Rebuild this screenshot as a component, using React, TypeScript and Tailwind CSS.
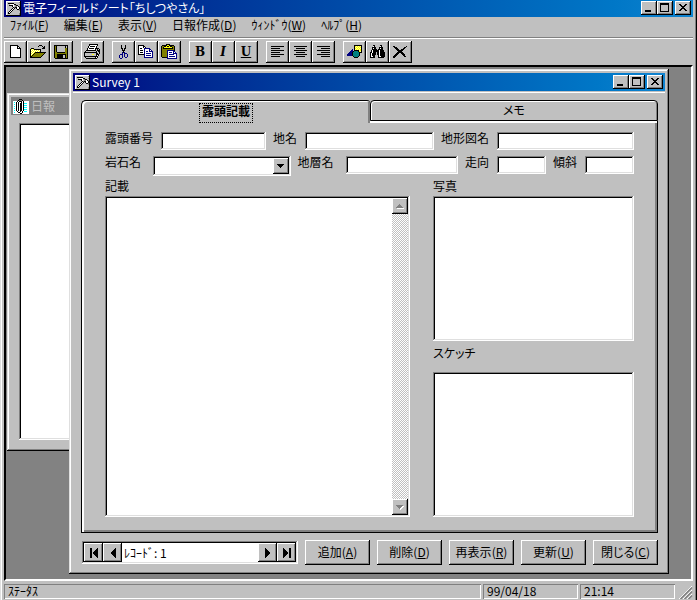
import { useState } from "react";
import type { ReactNode } from "react";
import clsx from "clsx";

const RAISED = "bg-[#c0c0c0] shadow-[inset_-1px_-1px_#000,inset_1px_1px_#fff,inset_-2px_-2px_#808080]";
const SUNKEN = "bg-white shadow-[inset_-1px_-1px_#fff,inset_1px_1px_#808080,inset_-2px_-2px_#dfdfdf,inset_2px_2px_#000]";
const WINDOW = "bg-[#c0c0c0] shadow-[inset_-1px_-1px_#000,inset_1px_1px_#dfdfdf,inset_-2px_-2px_#808080,inset_2px_2px_#fff]";

const PALETTE: Record<string, string> = {
    k: "#000000",
    w: "#ffffff",
    g: "#808080",
    s: "#c0c0c0",
    y: "#808000",
    Y: "#ffff00",
    L: "#ffff99",
    b: "#000080",
    t: "#008080",
    c: "#00ffff",
};

// 16 colour bitmap icons, one character per pixel
const ICONS = {
    hammer: [
        "wwwwwwwwwwwwwwk",
        "wssssssssssssgk",
        "wskkkkkkssssssk",
        "wssswwwwkksssgk",
        "wsskkkkwsgkkssk",
        "wssssskwsggwkgk",
        "wsssssskgkkwwkk",
        "wssssskwkskwwkk",
        "wsssskwkssskkgk",
        "wssskwkssssssgk",
        "wsskwkssssssssk",
        "wskwksssssssssk",
        "wskksssssssssgk",
        "wssssssssssssgk",
        "kkkkkkkkkkkkkkk",
    ],
    clip: [
        "......kkk.......",
        ".....k...k......",
        "wwwwkwkkkwkwwwww",
        "wcwkwkwwkwkwwwww",
        "wwwkwkwkkwkcccww",
        "wcwkwkwkkwkwwwww",
        "wwwkwkwkkwkcccww",
        "wcwkwkwkkwkwwwww",
        "wwwkwkwkkwkcccww",
        "wcwkwkwkkwkwwwww",
        "wwwkwkwkkwkcccww",
        "wcwkwkwkkwkwwwww",
        "wwwwkwwkwkwcccww",
        "wcwwwkkwwkwwwwww",
        "wwwwwwwkkwwwwwww",
    ],
    file: [
        "kkkkkkkk...",
        "kwwwwwwkk..",
        "kwwwwwwkwk.",
        "kwwwwwwkkkk",
        "kwwwwwwwwwk",
        "kwwwwwwwwwk",
        "kwwwwwwwwwk",
        "kwwwwwwwwwk",
        "kwwwwwwwwwk",
        "kwwwwwwwwwk",
        "kwwwwwwwwwk",
        "kwwwwwwwwwk",
        "kkkkkkkkkkk",
    ],
    open: [
        ".........kkk....",
        "........k...k.k.",
        ".............kk.",
        ".kkk........kkk.",
        "kYwYkkkkkkk.....",
        "kwYwYwYwYwk.....",
        "kYwYwYwYwYk.....",
        "kwYwYkkkkkkkkkkk",
        "kYwYkyyyyyyyyyk.",
        "kwYkyyyyyyyyyk..",
        "kYkyyyyyyyyyk...",
        "kkyyyyyyyyyk....",
        "kkkkkkkkkkk.....",
    ],
    save: [
        "kkkkkkkkkkkkkk",
        "kykssssssssksk",
        "kykssssssssksk",
        "kykssssssssyyk",
        "kykssssssssyyk",
        "kykssssssssyyk",
        "kykssssssssyyk",
        "kyykkkkkkkkyyk",
        "kyyyyyyyyyyyyk",
        "kyykkkkkkkkkyk",
        "kyykkkkkksskyk",
        "kyykkkkkksskyk",
        "kyykkkkkksskyk",
        ".kkkkkkkkkkkkk",
    ],
    print: [
        ".....kkkkkkkkk..",
        ".....kwwwwwwwk..",
        "....kwkkkkkwk...",
        "....kwwwwwwwk...",
        "...kwkkkkkwkkkk.",
        "...kwwwwwwwk.k.k",
        "..kkkkkkkkkk.kkk",
        ".k..........k.kk",
        "kkkkkkkkkkkkk.sk",
        "kssssssssssskksk",
        "ksssssssYYsskkk.",
        "kssssssssssskwk.",
        "kkkkkkkkkkkkkk..",
        ".kssssssssskwk..",
        "..kkkkkkkkkkk...",
    ],
    cut: [
        "..k...k..",
        "..k...k..",
        "..k...k..",
        "..kk.kk..",
        "...k.k...",
        "...kkk...",
        "....k....",
        "...bkb...",
        "...b.bbb.",
        ".bbb.b..b",
        "b..b.b..b",
        "b..b.b..b",
        "b..b..bb.",
        ".bb......",
    ],
    copy: [
        "kkkkkk..........",
        "kwwwwkk.........",
        "kwwwwkwk........",
        "kwkkwwbbbbbb....",
        "kwwwwwbwwwwbb...",
        "kwkkkwbwwwwbwb..",
        "kwwwwwbwbbwbbbb.",
        "kwkkkwbwwwwwwwb.",
        "kwwwwwbwbbbbbwb.",
        "kkkkkkbwwwwwwwb.",
        "......bwbbbbbwb.",
        "......bwwwwwwwb.",
        "......bbbbbbbbb.",
    ],
    paste: [
        ".....kkkk.......",
        ".kkkkkYYkkkkk...",
        "kyykkYkkYkkyyk..",
        "kykYYYYYYYYkyk..",
        "kykkkkkkkkkkyk..",
        "kyyyyyyyyyyyyk..",
        "kyyyyybbbbbbbk..",
        "kyyyyybwwwwwbb..",
        "kyyyyybwbbbwbwb.",
        "kyyyyybwwwwwbbbb",
        "kyyyyybwbbbbbwwb",
        "kyyyyybwwwwwwwwb",
        "kyyyyybwbbbbbbwb",
        ".kkkkkbwwwwwwwwb",
        "......bbbbbbbbbb",
    ],
    shapes: [
        ".......kkkkkkkk",
        ".......kYLYLYLk",
        ".......kLYLYLYk",
        ".......kYLYLYLk",
        ".....b.kLYLYLYk",
        "....bb.kkkkkLYk",
        "...bbbkttttkYLk",
        "..bbbkttttttkkk",
        ".bbbbkttttttk..",
        "bbbbbkttttttk..",
        "bbbbbkttttttk..",
        "......kttttk...",
        ".......kkkk....",
    ],
    find: [
        "...kk.....kk...",
        "...wk.....wk...",
        "..kkkk...kkkk..",
        "..kwkk...kwkk..",
        "..kkkkk.kkkkk..",
        ".kwkkkkkkwkkkk.",
        ".kwkkkkkkwkkkk.",
        "kkwkkkskkwkkkkk",
        "kwkkkkskkwkkkkk",
        "kwkkkk.kkwkkkkk",
        "kwkkk...kwkkkkk",
        "kwwkk...kwwkkkk",
        "kkkkk...kkkkkk.",
    ],
    remove: [
        "kk...........k",
        ".kkk.......kk.",
        "..kkk.....kk..",
        "...kkk..kkk...",
        "....kkkkkk....",
        ".....kkkk.....",
        "....kkkkkk....",
        "...kkk..kkk...",
        "..kkk....kkk..",
        ".kkk......kk..",
        "kkk........kk.",
        "kk............",
    ],
    left: ["kkkkkkkkkkkkk", "", "kkkkkkkkk", "", "kkkkkkkkkkkkk", "", "kkkkkkkkk", "", "kkkkkkkkkkkkk", "", "kkkkkkkkk"],
    center: ["kkkkkkkkkkkkk", "", "..kkkkkkkkk", "", "kkkkkkkkkkkkk", "", "..kkkkkkkkk", "", "kkkkkkkkkkkkk", "", "..kkkkkkkkk"],
    right: ["kkkkkkkkkkkkk", "", "....kkkkkkkkk", "", "kkkkkkkkkkkkk", "", "....kkkkkkkkk", "", "kkkkkkkkkkkkk", "", "....kkkkkkkkk"],
    minimize: ["........", "........", "........", "........", "........", "........", "kkkkkk..", "kkkkkk.."],
    maximize: ["kkkkkkkkk", "kkkkkkkkk", "k.......k", "k.......k", "k.......k", "k.......k", "k.......k", "k.......k", "kkkkkkkkk"],
    close: ["kk....kk", ".kk..kk.", "..kkkk..", "...kk...", "..kkkk..", ".kk..kk.", "kk....kk"],
    down: ["kkkkkkk", ".kkkkk.", "..kkk..", "...k..."],
    scrollUp: ["...g....", "..ggg...", ".ggggg..", "ggggggg.", ".wwwwwww"],
    scrollDown: ["ggggggg.", ".gggggww", "..gggww.", "...gww..", "....w..."],
    first: ["kk.....k", "kk....kk", "kk...kkk", "kk..kkkk", "kk.kkkkk", "kk.kkkkk", "kk..kkkk", "kk...kkk", "kk....kk", "kk.....k"],
    prev: [".....k", "....kk", "...kkk", "..kkkk", ".kkkkk", ".kkkkk", "..kkkk", "...kkk", "....kk", ".....k"],
    next: ["k.....", "kk....", "kkk...", "kkkk..", "kkkkk.", "kkkkk.", "kkkk..", "kkk...", "kk....", "k....."],
    last: ["k.....kk", "kk....kk", "kkk...kk", "kkkk..kk", "kkkkk.kk", "kkkkk.kk", "kkkk..kk", "kkk...kk", "kk....kk", "k.....kk"],
};

type IconName = keyof typeof ICONS;

function Icon({ name }: { name: IconName }) {
    const rows = ICONS[name];
    const width = Math.max(...rows.map((row) => row.length));
    return (
        <svg width={width} height={rows.length} shapeRendering="crispEdges" aria-hidden="true" className="shrink-0">
            {rows.map((row, y) =>
                row.split("").map((c, x) =>
                    PALETTE[c] ? <rect key={`${x}-${y}`} x={x} y={y} width="1" height="1" fill={PALETTE[c]} /> : null
                )
            )}
        </svg>
    );
}

function WindowButtons() {
    const button = clsx(RAISED, "flex h-3.5 w-4 items-center justify-center pr-px pb-px");
    return (
        <div className="flex">
            <button className={button} aria-label="最小化"><Icon name="minimize" /></button>
            <button className={button} aria-label="最大化"><Icon name="maximize" /></button>
            <button className={clsx(button, "ml-0.5")} aria-label="閉じる"><Icon name="close" /></button>
        </div>
    );
}

function Key({ children }: { children: string }) {
    return <>(<span className="underline underline-offset-1">{children}</span>)</>;
}

const MENUS = [
    ["ﾌｧｲﾙ", "F"],
    ["編集", "E"],
    ["表示", "V"],
    ["日報作成", "D"],
    ["ｳｨﾝﾄﾞｳ", "W"],
    ["ﾍﾙﾌﾟ", "H"],
];

const TOOLS: { label: string; icon?: IconName; text?: ReactNode }[][] = [
    [
        { label: "新規作成", icon: "file" },
        { label: "開く", icon: "open" },
        { label: "保存", icon: "save" },
    ],
    [{ label: "印刷", icon: "print" }],
    [
        { label: "切り取り", icon: "cut" },
        { label: "コピー", icon: "copy" },
        { label: "貼り付け", icon: "paste" },
    ],
    [
        { label: "太字", text: "B" },
        { label: "斜体", text: <i>I</i> },
        { label: "下線", text: <u>U</u> },
    ],
    [
        { label: "左揃え", icon: "left" },
        { label: "中央揃え", icon: "center" },
        { label: "右揃え", icon: "right" },
    ],
    [
        { label: "図形", icon: "shapes" },
        { label: "検索", icon: "find" },
        { label: "削除", icon: "remove" },
    ],
];

function Toolbar() {
    return (
        <div role="toolbar" className="flex gap-2 py-0.5">
            {TOOLS.map((group, i) => (
                <div key={i} className="flex">
                    {group.map((tool) => (
                        <button
                            key={tool.label}
                            aria-label={tool.label}
                            className={clsx(RAISED, "flex h-[22px] w-[23px] items-center justify-center pr-px pb-px font-['DejaVu_Serif',serif] text-[12px] leading-4 font-bold")}
                        >
                            {tool.icon ? <Icon name={tool.icon} /> : tool.text}
                        </button>
                    ))}
                </div>
            ))}
        </div>
    );
}

function Field({ id, label, labelWidth, width }: { id: string; label: string; labelWidth: string; width: string }) {
    return (
        <div className={clsx("flex min-w-0 items-start", width)}>
            <label htmlFor={id} className={clsx("shrink-0 leading-3 whitespace-nowrap", labelWidth)}>{label}</label>
            <input id={id} type="text" className={clsx(SUNKEN, "h-[18px] w-0 min-w-0 grow px-1 outline-none")} />
        </div>
    );
}

function RecordForm() {
    return (
        <div className="flex min-h-0 grow flex-col border-x border-b border-black pt-[9px] pr-[23px] pb-[15px] pl-[23px] shadow-[inset_2px_0_#fff,inset_-2px_-2px_#808080]">
            <div className="flex gap-[7px]">
                <Field id="no" label="露頭番号" labelWidth="w-14" width="w-[161px] grow" />
                <Field id="place" label="地名" labelWidth="w-8" width="w-[161px] grow" />
                <Field id="map" label="地形図名" labelWidth="w-14" width="w-[193px] grow" />
            </div>
            <div className="mt-1.5 flex gap-[7px]">
                <div className="flex w-[185px] min-w-0 grow items-start">
                    <label htmlFor="rock" className="w-12 shrink-0 leading-3">岩石名</label>
                    <div className="relative w-0 grow">
                        <select id="rock" className={clsx(SUNKEN, "block h-5 w-full appearance-none px-1 outline-none")}>
                            <option></option>
                        </select>
                        <span className={clsx(RAISED, "pointer-events-none absolute inset-y-0.5 right-0.5 flex w-4 items-center justify-center")}>
                            <Icon name="down" />
                        </span>
                    </div>
                </div>
                <Field id="stratum" label="地層名" labelWidth="w-12" width="w-[160px] grow" />
                <Field id="strike" label="走向" labelWidth="w-8" width="w-[81px]" />
                <Field id="dip" label="傾斜" labelWidth="w-8" width="w-[81px]" />
            </div>
            <div className="flex min-h-0 grow gap-[23px]">
                <div className="flex w-[305px] grow flex-col">
                    <label htmlFor="note" className="h-5 leading-5">記載</label>
                    <div className={clsx(SUNKEN, "flex min-h-0 grow p-0.5")}>
                        <textarea id="note" className="min-w-0 grow resize-none bg-transparent p-1 outline-none" />
                        <div className="flex w-4 flex-col justify-between bg-[repeating-conic-gradient(#c0c0c0_0_25%,#fff_0_50%)] bg-[length:2px_2px]">
                            <button aria-label="上へ" className={clsx(RAISED, "flex h-4 items-center justify-center")}><Icon name="scrollUp" /></button>
                            <button aria-label="下へ" className={clsx(RAISED, "flex h-4 items-center justify-center")}><Icon name="scrollDown" /></button>
                        </div>
                    </div>
                </div>
                <div className="flex w-[201px] grow flex-col">
                    <h3 className="h-5 leading-5">写真</h3>
                    <div className={clsx(SUNKEN, "grow")} />
                    <h3 className="h-[31px] leading-6">スケッチ</h3>
                    <div className={clsx(SUNKEN, "grow")} />
                </div>
            </div>
        </div>
    );
}

const ACTIONS = [
    ["追加", "A"],
    ["削除", "D"],
    ["再表示", "R"],
    ["更新", "U"],
    ["閉じる", "C"],
];

function RecordNav() {
    const button = clsx(RAISED, "flex w-[19px] items-center justify-center");
    return (
        <div className={clsx(SUNKEN, "ml-px flex h-[23px] grow p-0.5")}>
            <button className={button} aria-label="先頭"><Icon name="first" /></button>
            <button className={button} aria-label="前へ"><Icon name="prev" /></button>
            <span className="grow pl-0.5 leading-[19px]">ﾚｺｰﾄﾞ: 1</span>
            <button className={button} aria-label="次へ"><Icon name="next" /></button>
            <button className={button} aria-label="最後"><Icon name="last" /></button>
        </div>
    );
}

function SurveyWindow() {
    const [tab, setTab] = useState(0);
    return (
        <section className={clsx(WINDOW, "absolute top-0.5 right-[22px] bottom-[5px] left-[63px] flex flex-col p-1")}>
            <div className="flex h-[18px] shrink-0 items-center bg-linear-to-r from-[#000080] to-[#1084d0] px-0.5 text-white">
                <Icon name="hammer" />
                <h2 className="grow pl-0.5">Survey 1</h2>
                <WindowButtons />
            </div>
            <div className="mt-px h-px shrink-0 bg-white" />
            <div className="flex min-h-0 grow flex-col pt-[7px] pr-[7px] pb-[5px] pl-2">
                <div role="tablist" className="flex h-[23px] shrink-0">
                    <button
                        role="tab"
                        aria-selected={tab === 0}
                        onClick={() => setTab(0)}
                        className="flex flex-1 justify-center rounded-tl-[5px] rounded-tr-[3px] border-t border-l border-black pt-0.5 font-bold shadow-[inset_2px_1px_#fff,inset_-2px_0_#808080]"
                    >
                        <span className="border border-dotted border-black px-0.5">露頭記載</span>
                    </button>
                    <div className="flex flex-1 flex-col">
                        <button
                            role="tab"
                            aria-selected={tab === 1}
                            onClick={() => setTab(1)}
                            className="h-[21px] rounded-t-[4px] border border-black pb-0.5 shadow-[inset_1px_1px_#fff,inset_-1px_0_#808080]"
                        >
                            メモ
                        </button>
                        <div className="h-0.5 border-r border-black bg-white" />
                    </div>
                </div>
                <RecordForm />
                <div className="mt-[7px] flex shrink-0 items-center gap-[7px]">
                    <RecordNav />
                    {ACTIONS.map(([label, key]) => (
                        <button key={key} className={clsx(RAISED, "h-[25px] w-[65px] shrink-0 pb-0.5 whitespace-nowrap")}>
                            {label}<Key>{key}</Key>
                        </button>
                    ))}
                </div>
            </div>
        </section>
    );
}

function DailyWindow() {
    return (
        <section className={clsx(WINDOW, "absolute top-[26px] bottom-[128px] left-px flex w-[400px] flex-col p-1")}>
            <div className="flex h-[18px] shrink-0 items-center bg-linear-to-r from-[#808080] to-[#b5b5b5] px-0.5 text-[#c0c0c0]">
                <Icon name="clip" />
                <h2 className="pl-0.5">日報</h2>
            </div>
            <div className="flex grow p-2 pb-[7px]">
                <div className={clsx(SUNKEN, "grow")} />
            </div>
        </section>
    );
}

function StatusBar() {
    const panel = "h-[15px] pl-1 shadow-[inset_1px_1px_#808080,inset_-1px_-1px_#fff]";
    return (
        <footer className="flex h-[19px] shrink-0 gap-0.5 pt-[3px] leading-[14px]">
            <div className={clsx(panel, "grow")}>ｽﾃｰﾀｽ</div>
            <div className={clsx(panel, "w-[95px]")}>99/04/18</div>
            <div className={clsx(panel, "w-[95px]")}>21:14</div>
            <svg width="16" height="14" viewBox="0 0 14 14" className="mt-px" aria-hidden="true">
                <path d="M1 14 14 1M5 14l9-9M9 14l5-5" stroke="#fff" />
                <path d="M2.5 14 14 2.5M6.5 14 14 6.5M10.5 14l3.5-3.5" stroke="#808080" strokeWidth="1.5" />
            </svg>
        </footer>
    );
}

export default function App() {
    return (
        <div className="flex h-screen flex-col bg-[#c0c0c0] px-1 font-['Noto_Sans_CJK_JP',sans-serif] text-[12px] leading-[14px] text-black shadow-[inset_1px_0_#dfdfdf,inset_-1px_0_#000,inset_2px_0_#fff,inset_-2px_0_#808080] [font-feature-settings:'palt']">
            <header className="flex h-[17px] shrink-0 items-center bg-linear-to-r from-[#000080] to-[#1084d0] px-0.5 pb-px text-white">
                <Icon name="hammer" />
                <h1 className="grow pl-0.5 whitespace-nowrap">電子フィールドノート「ちしつやさん」</h1>
                <WindowButtons />
            </header>
            <nav className="flex h-[21px] shrink-0 gap-[15px] border-b border-[#808080] pl-1.5">
                {MENUS.map(([label, key]) => (
                    <button key={key} className="pb-1 whitespace-nowrap">
                        {label}<Key>{key}</Key>
                    </button>
                ))}
            </nav>
            <div className="h-px shrink-0 bg-white" />
            <Toolbar />
            <main className="relative min-h-0 grow overflow-hidden border-2 border-t-black border-r-white border-b-white border-l-black bg-[#828282]">
                <DailyWindow />
                <SurveyWindow />
            </main>
            <StatusBar />
        </div>
    );
}
